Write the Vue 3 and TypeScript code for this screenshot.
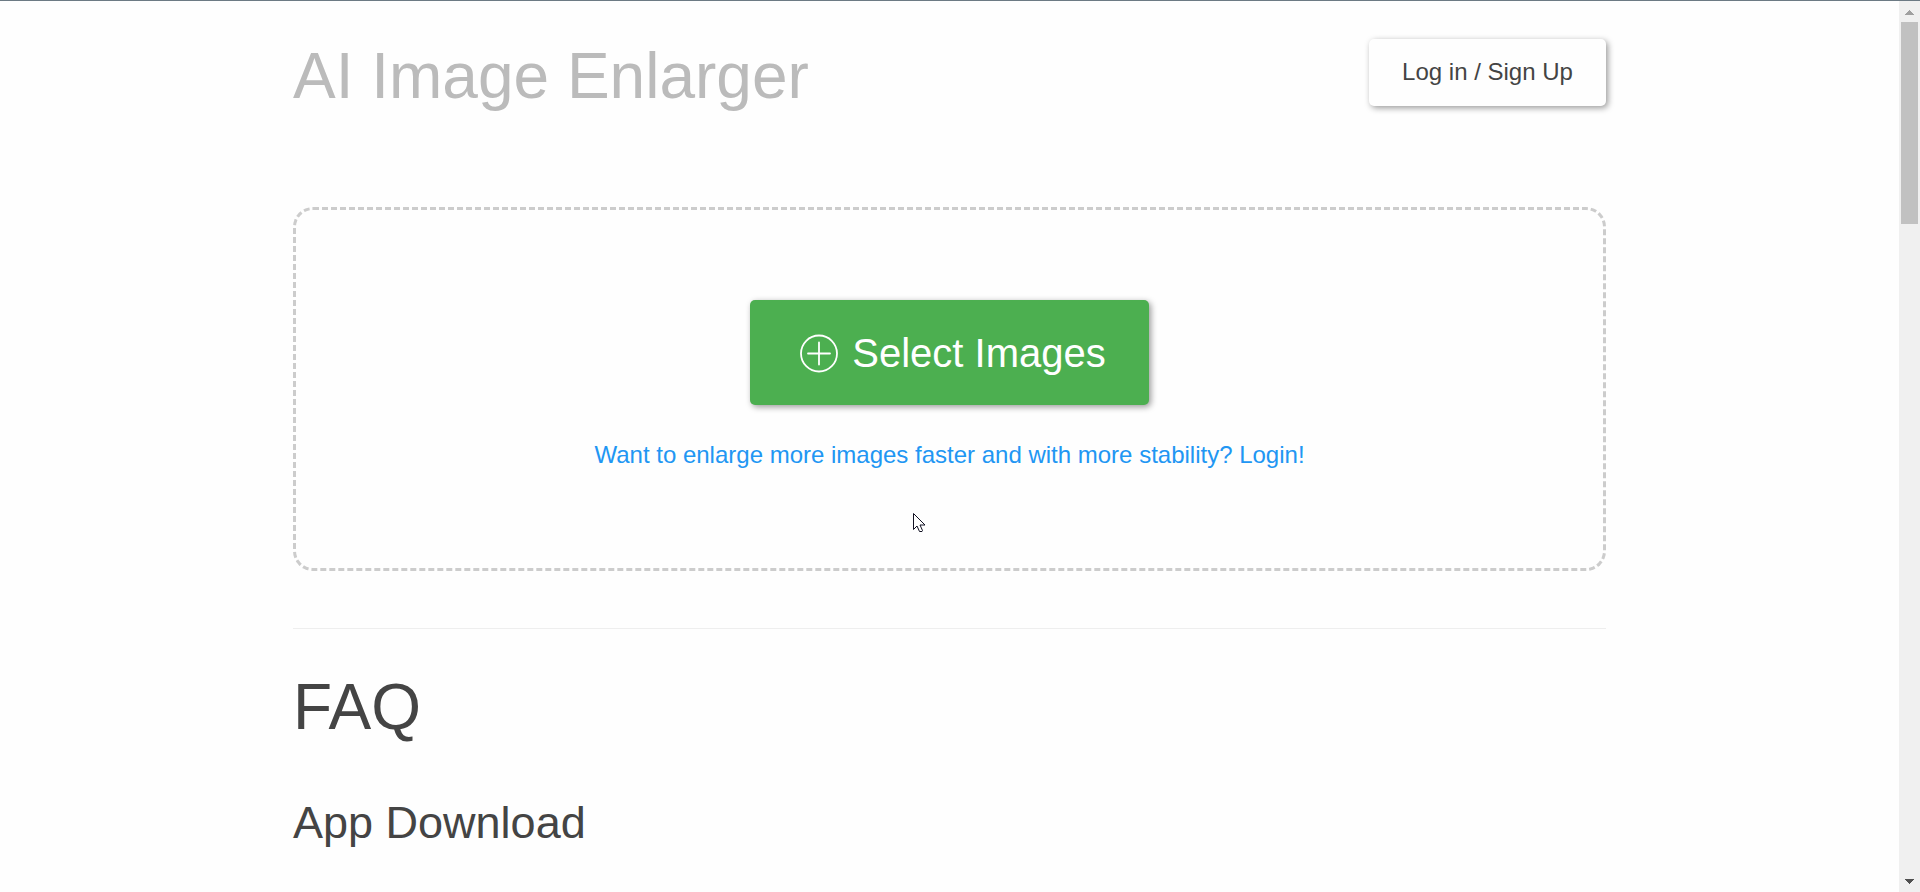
<script setup lang="ts">
import { ref } from 'vue'

const picker = ref<HTMLInputElement | null>(null)

function openPicker(): void {
  picker.value?.click()
}
</script>

<template>
  <div class="window">
    <div class="viewport">
      <div class="page">
        <header class="header">
          <h1 class="title">AI Image Enlarger</h1>
          <button class="login" type="button">Log in / Sign Up</button>
        </header>

        <main>
          <section class="dropzone">
            <button class="select" type="button" @click="openPicker">
              <svg class="plus" viewBox="0 0 38 38" aria-hidden="true">
                <circle cx="19" cy="18.5" r="18" />
                <path d="M19 7.500v22M8 18.500h22" />
              </svg>
              <span>Select Images</span>
            </button>
            <input ref="picker" type="file" accept="image/*" multiple hidden aria-label="Select Images" />
            <a class="hint" href="#login">Want to enlarge more images faster and with more stability? Login!</a>
          </section>

          <section class="faq">
            <h2 class="faq-title">FAQ</h2>
            <h3 class="question">App Download</h3>
          </section>
        </main>
      </div>
    </div>

    <div class="scrollbar" aria-hidden="true">
      <svg class="arrow up" viewBox="0 0 9 5"><path d="M4 0h1v1h1v1h1v1h1v1h1v1H0V4h1V3h1V2h1V1h1z" /></svg>
      <div class="track"><div class="thumb"></div></div>
      <svg class="arrow down" viewBox="0 0 9 5"><path d="M0 0h9v1H8v1H7v1H6v1H5v1H4V4H3V3H2V2H1V1H0z" /></svg>
    </div>

    <svg class="pointer" viewBox="0 0 13 20" aria-hidden="true">
      <path d="M.5.5v16l3.500-3.500 2.500 5.500h2.500l.5-1-2.500-5.500h5z" />
    </svg>
  </div>
</template>

<style>
body {
  margin: 0;
  background: #fefefe;
}
</style>

<style scoped>
.window {
  position: relative;
  box-sizing: border-box;
  display: flex;
  height: 100vh;
  overflow: hidden;
  border-top: 1px solid #6c7a84;
  color: #444;
  font-family: "Liberation Sans", Arial, sans-serif;
}

.viewport {
  flex: 1;
  min-width: 0;
  overflow: hidden;
}

.page {
  box-sizing: border-box;
  max-width: 1345px;
  margin: 0 auto;
  padding: 38px 16px 0;
}

.header {
  display: flex;
  align-items: flex-start;
  justify-content: space-between;
}

.title,
.faq-title,
.question {
  margin: 0;
  font-weight: 400;
}

.title,
.faq-title {
  font-size: 64px;
  line-height: 74px;
}

.title {
  color: #bbb;
}

.login,
.select {
  border: 0;
  border-radius: 5px;
  box-shadow: 2px 2px 6px rgba(0, 0, 0, 0.4);
  font-family: inherit;
  cursor: pointer;
}

.login {
  min-width: 237px;
  padding: 19px 30px 21px;
  background: #fefefe;
  color: #444;
  font-size: 24px;
  line-height: 27px;
}

.dropzone {
  box-sizing: border-box;
  display: flex;
  flex-direction: column;
  align-items: center;
  min-height: 364px;
  margin-top: 94px;
  padding: 90px 24px;
  border: 3px dashed #ccc;
  border-radius: 20px;
}

.select {
  display: flex;
  align-items: center;
  justify-content: center;
  gap: 14px;
  min-width: 399px;
  padding: 30px 43px 28px 50px;
  background: #4caf50;
  color: #fff;
  font-size: 40px;
  line-height: 47px;
}

.plus {
  width: 38px;
  height: 38px;
  overflow: visible;
  fill: none;
  stroke: #fff;
  stroke-width: 1.8;
  stroke-linecap: round;
}

.hint {
  margin-top: 36px;
  color: #2196f3;
  font-size: 24px;
  line-height: 27px;
  text-decoration: none;
}

.faq {
  margin-top: 57px;
  padding-top: 41px;
  border-top: 1px solid #eee;
}

.question {
  margin-top: 53px;
  font-size: 45px;
  line-height: 52px;
}

.scrollbar {
  box-sizing: border-box;
  display: flex;
  flex-direction: column;
  align-items: center;
  width: 21px;
  padding: 9px 0 8px;
  background: #f0f0f0;
}

.arrow {
  width: 9px;
  height: 5px;
  shape-rendering: crispEdges;
}

.up {
  fill: #a0a0a0;
}

.down {
  fill: #505050;
}

.track {
  flex: 1;
  width: 17px;
  padding: 7px 0;
}

.thumb {
  height: 202px;
  background: #c1c1c1;
}

.pointer {
  position: absolute;
  top: 512px;
  left: 913px;
  width: 13px;
  height: 20px;
  fill: #fff;
  stroke: #112;
  stroke-width: 1;
}
</style>
